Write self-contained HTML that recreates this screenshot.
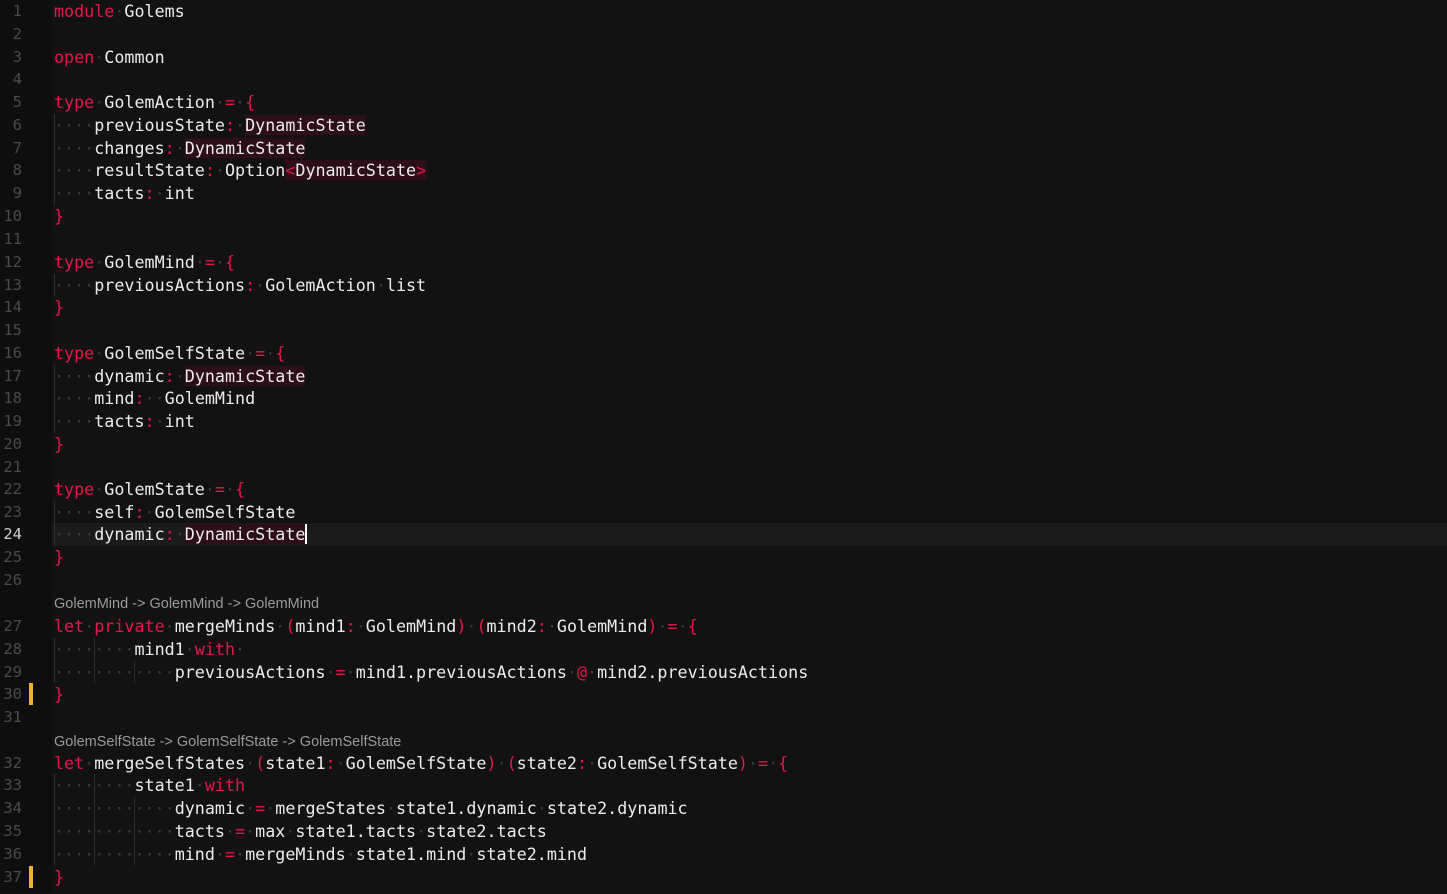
<!DOCTYPE html>
<html><head><meta charset="utf-8"><style>
html,body{margin:0;width:1447px;height:893px;background:#121212;overflow:hidden}
.gut{position:absolute;left:0;top:0;width:52px;height:893px;background:#0e0e0e}
.ln{position:absolute;left:0;width:22px;text-align:right;font:15.5px "DejaVu Sans Mono",monospace;color:#4a4a4a;height:23px;line-height:23px}
.c{position:absolute;left:54px;white-space:pre;font:16.72px "DejaVu Sans Mono",monospace;color:#ececec;height:23px;line-height:23px}
.k{color:#e8164a}.d{color:#3c3c3c}.t{background:#2c0f18}
.lens{position:absolute;left:54px;font:14.5px "Liberation Sans",sans-serif;color:#9a9a9a;line-height:20px}
.cur{position:absolute;left:52px;width:1395px;background:#1b1b1b;height:23px}
.g{position:absolute;width:1px;background:#2e2e2e}
.mod{position:absolute;left:29px;width:4px;background:#f0b030;height:22px}
.w{position:absolute;left:0;top:1px;width:1447px;height:893px}
</style></head><body>
<div class="gut"></div>
<div class="w">
<div class="cur" style="top:522px"></div>
<div class="g" style="left:54px;top:113px;height:91px"></div>
<div class="g" style="left:54px;top:273px;height:22px"></div>
<div class="g" style="left:54px;top:364px;height:68px"></div>
<div class="g" style="left:54px;top:500px;height:45px"></div>
<div class="g" style="left:54px;top:637px;height:45px"></div>
<div class="g" style="left:94px;top:637px;height:45px"></div>
<div class="g" style="left:134px;top:660px;height:22px"></div>
<div class="g" style="left:54px;top:773px;height:91px"></div>
<div class="g" style="left:94px;top:773px;height:91px"></div>
<div class="g" style="left:134px;top:796px;height:68px"></div>
<div class="mod" style="top:682px"></div>
<div class="mod" style="top:865px"></div>
<div class="lens" style="top:593px">GolemMind -&gt; GolemMind -&gt; GolemMind</div>
<div class="lens" style="top:731px">GolemSelfState -&gt; GolemSelfState -&gt; GolemSelfState</div>

<div class="ln" style="top:-1px">1</div><div class="c" style="top:-1px"><span class="k">module</span><span class="d">·</span>Golems</div>
<div class="ln" style="top:22px">2</div>
<div class="ln" style="top:45px">3</div><div class="c" style="top:45px"><span class="k">open</span><span class="d">·</span>Common</div>
<div class="ln" style="top:67px">4</div>
<div class="ln" style="top:90px">5</div><div class="c" style="top:90px"><span class="k">type</span><span class="d">·</span>GolemAction<span class="d">·</span><span class="k">=</span><span class="d">·</span><span class="k">{</span></div>
<div class="ln" style="top:113px">6</div><div class="c" style="top:113px"><span class="d">····</span>previousState<span class="k">:</span><span class="d">·</span><span class="t">DynamicState</span></div>
<div class="ln" style="top:136px">7</div><div class="c" style="top:136px"><span class="d">····</span>changes<span class="k">:</span><span class="d">·</span><span class="t">DynamicState</span></div>
<div class="ln" style="top:158px">8</div><div class="c" style="top:158px"><span class="d">····</span>resultState<span class="k">:</span><span class="d">·</span>Option<span class="k t">&lt;</span><span class="t">DynamicState</span><span class="k t">&gt;</span></div>
<div class="ln" style="top:181px">9</div><div class="c" style="top:181px"><span class="d">····</span>tacts<span class="k">:</span><span class="d">·</span>int</div>
<div class="ln" style="top:204px">10</div><div class="c" style="top:204px"><span class="k">}</span></div>
<div class="ln" style="top:227px">11</div>
<div class="ln" style="top:250px">12</div><div class="c" style="top:250px"><span class="k">type</span><span class="d">·</span>GolemMind<span class="d">·</span><span class="k">=</span><span class="d">·</span><span class="k">{</span></div>
<div class="ln" style="top:273px">13</div><div class="c" style="top:273px"><span class="d">····</span>previousActions<span class="k">:</span><span class="d">·</span>GolemAction<span class="d">·</span>list</div>
<div class="ln" style="top:295px">14</div><div class="c" style="top:295px"><span class="k">}</span></div>
<div class="ln" style="top:318px">15</div>
<div class="ln" style="top:341px">16</div><div class="c" style="top:341px"><span class="k">type</span><span class="d">·</span>GolemSelfState<span class="d">·</span><span class="k">=</span><span class="d">·</span><span class="k">{</span></div>
<div class="ln" style="top:364px">17</div><div class="c" style="top:364px"><span class="d">····</span>dynamic<span class="k">:</span><span class="d">·</span><span class="t">DynamicState</span></div>
<div class="ln" style="top:386px">18</div><div class="c" style="top:386px"><span class="d">····</span>mind<span class="k">:</span><span class="d">··</span>GolemMind</div>
<div class="ln" style="top:409px">19</div><div class="c" style="top:409px"><span class="d">····</span>tacts<span class="k">:</span><span class="d">·</span>int</div>
<div class="ln" style="top:432px">20</div><div class="c" style="top:432px"><span class="k">}</span></div>
<div class="ln" style="top:455px">21</div>
<div class="ln" style="top:477px">22</div><div class="c" style="top:477px"><span class="k">type</span><span class="d">·</span>GolemState<span class="d">·</span><span class="k">=</span><span class="d">·</span><span class="k">{</span></div>
<div class="ln" style="top:500px">23</div><div class="c" style="top:500px"><span class="d">····</span>self<span class="k">:</span><span class="d">·</span>GolemSelfState</div>
<div class="ln" style="top:522px;color:#d0d0d0">24</div><div class="c" style="top:522px"><span class="d">····</span>dynamic<span class="k">:</span><span class="d">·</span><span class="t" style="border-right:2px solid #fff">DynamicState</span></div>
<div class="ln" style="top:545px">25</div><div class="c" style="top:545px"><span class="k">}</span></div>
<div class="ln" style="top:568px">26</div>
<div class="ln" style="top:614px">27</div><div class="c" style="top:614px"><span class="k">let</span><span class="d">·</span><span class="k">private</span><span class="d">·</span>mergeMinds<span class="d">·</span><span class="k">(</span>mind1<span class="k">:</span><span class="d">·</span>GolemMind<span class="k">)</span><span class="d">·</span><span class="k">(</span>mind2<span class="k">:</span><span class="d">·</span>GolemMind<span class="k">)</span><span class="d">·</span><span class="k">=</span><span class="d">·</span><span class="k">{</span></div>
<div class="ln" style="top:637px">28</div><div class="c" style="top:637px"><span class="d">········</span>mind1<span class="d">·</span><span class="k">with</span><span class="d">·</span></div>
<div class="ln" style="top:660px">29</div><div class="c" style="top:660px"><span class="d">············</span>previousActions<span class="d">·</span><span class="k">=</span><span class="d">·</span>mind1.previousActions<span class="d">·</span><span class="k">@</span><span class="d">·</span>mind2.previousActions</div>
<div class="ln" style="top:682px">30</div><div class="c" style="top:682px"><span class="k">}</span></div>
<div class="ln" style="top:705px">31</div>
<div class="ln" style="top:751px">32</div><div class="c" style="top:751px"><span class="k">let</span><span class="d">·</span>mergeSelfStates<span class="d">·</span><span class="k">(</span>state1<span class="k">:</span><span class="d">·</span>GolemSelfState<span class="k">)</span><span class="d">·</span><span class="k">(</span>state2<span class="k">:</span><span class="d">·</span>GolemSelfState<span class="k">)</span><span class="d">·</span><span class="k">=</span><span class="d">·</span><span class="k">{</span></div>
<div class="ln" style="top:773px">33</div><div class="c" style="top:773px"><span class="d">········</span>state1<span class="d">·</span><span class="k">with</span></div>
<div class="ln" style="top:796px">34</div><div class="c" style="top:796px"><span class="d">············</span>dynamic<span class="d">·</span><span class="k">=</span><span class="d">·</span>mergeStates<span class="d">·</span>state1.dynamic<span class="d">·</span>state2.dynamic</div>
<div class="ln" style="top:819px">35</div><div class="c" style="top:819px"><span class="d">············</span>tacts<span class="d">·</span><span class="k">=</span><span class="d">·</span>max<span class="d">·</span>state1.tacts<span class="d">·</span>state2.tacts</div>
<div class="ln" style="top:842px">36</div><div class="c" style="top:842px"><span class="d">············</span>mind<span class="d">·</span><span class="k">=</span><span class="d">·</span>mergeMinds<span class="d">·</span>state1.mind<span class="d">·</span>state2.mind</div>
<div class="ln" style="top:865px">37</div><div class="c" style="top:865px"><span class="k">}</span></div>
</div>
</body></html>
